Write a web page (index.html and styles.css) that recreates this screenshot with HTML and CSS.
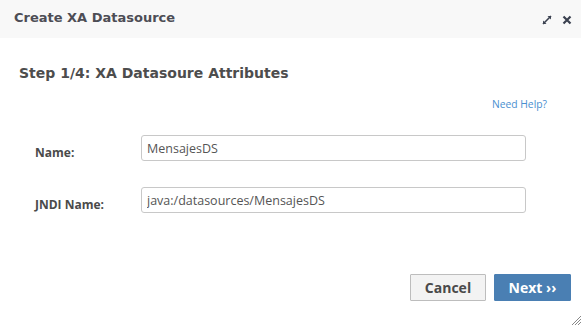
FILE: index.html
```html
<!DOCTYPE html>
<html>
<head>
<meta charset="utf-8">
<link rel="stylesheet" href="styles.css">
</head>
<body>
<div class="dialog">
  <div class="header">
    <div class="title">Create XA Datasource</div>
    <div class="tools">
      <svg class="icon" width="10" height="10" viewBox="0 0 10 10"><path d="M1 9 L9 1" stroke="#3b4150" stroke-width="1.6"/><path d="M5.5 1 H9 V4.5 Z" fill="#3b4150"/><path d="M1 5.5 V9 H4.5 Z" fill="#3b4150"/></svg>
      <svg class="icon" width="10" height="10" viewBox="0 0 10 10"><path d="M1.5 1.5 L8.5 8.5 M8.5 1.5 L1.5 8.5" stroke="#3b4150" stroke-width="2.2"/></svg>
    </div>
  </div>
  <div class="content">
    <h2 class="step">Step 1/4: XA Datasoure Attributes</h2>
    <div class="help"><a href="#">Need Help?</a></div>
    <div class="form">
      <label class="label">Name:</label>
      <input class="field" type="text" value="MensajesDS">
      <label class="label">JNDI Name:</label>
      <input class="field" type="text" value="java:/datasources/MensajesDS">
    </div>
  </div>
  <div class="footer">
    <button class="btn cancel">Cancel</button>
    <button class="btn next">Next &rsaquo;&rsaquo;</button>
  </div>
  <svg class="grip" width="10" height="10" viewBox="0 0 10 10"><path d="M10 1 L1 10 M10 4 L4 10 M10 7 L7 10" stroke="#888" stroke-width="1"/></svg>
</div>
</body>
</html>
```
FILE: styles.css
```css
html, body {
  margin: 0;
  padding: 0;
  background: #fff;
}
.dialog {
  position: relative;
  width: 581px;
  height: 325px;
  display: flex;
  flex-direction: column;
  font-family: "Open Sans", sans-serif;
}
.header {
  height: 38px;
  background: #f8f8f8;
  display: flex;
  align-items: center;
  justify-content: space-between;
  padding: 0 9px 0 14px;
}
.title {
  font-family: "DejaVu Sans", sans-serif;
  font-weight: bold;
  font-size: 13px;
  color: #4d4d55;
  margin-top: -3px;
}
.tools {
  display: flex;
  gap: 10px;
  align-items: center;
  margin-top: 2px;
}
.content {
  padding: 0 19px;
}
.step {
  margin: 25px 0 0;
  font-family: "DejaVu Sans", sans-serif;
  font-weight: bold;
  font-size: 14px;
  line-height: 20px;
  color: #4d4d4d;
}
.help {
  text-align: right;
  margin-top: 12px;
  padding-right: 15px;
  line-height: 14px;
}
.help a {
  font-size: 10.3px;
  color: #4a8fd0;
  text-decoration: none;
}
.form {
  display: grid;
  grid-template-columns: 106px 385px;
  grid-auto-rows: 26px;
  row-gap: 26px;
  margin-top: 24px;
  padding-left: 16px;
  align-items: start;
}
.label {
  font-weight: bold;
  font-size: 12px;
  line-height: 16px;
  padding-top: 10px;
  color: #4a4a4a;
}
.field {
  box-sizing: border-box;
  height: 26px;
  width: 385px;
  margin: 0;
  border: 1px solid #c8c8c8;
  border-radius: 3px;
  padding: 0 5px;
  font-family: "Open Sans", sans-serif;
  font-size: 12.5px;
  color: #555;
  background: #fff;
}
.footer {
  display: flex;
  justify-content: flex-end;
  gap: 8px;
  padding-right: 10px;
  margin-top: 61px;
}
.btn {
  box-sizing: border-box;
  height: 27px;
  font-family: "Open Sans", sans-serif;
  font-weight: bold;
  font-size: 14px;
  padding: 0;
  border-radius: 1px;
  cursor: pointer;
}
.cancel {
  width: 76px;
  background: #f3f3f3;
  border: 1px solid #bdbdbd;
  color: #4a4a4a;
}
.next {
  width: 77px;
  background: #4a7fb3;
  border: 1px solid #4a7fb3;
  color: #fff;
}
.grip {
  position: absolute;
  right: 0;
  bottom: 0;
}
```
